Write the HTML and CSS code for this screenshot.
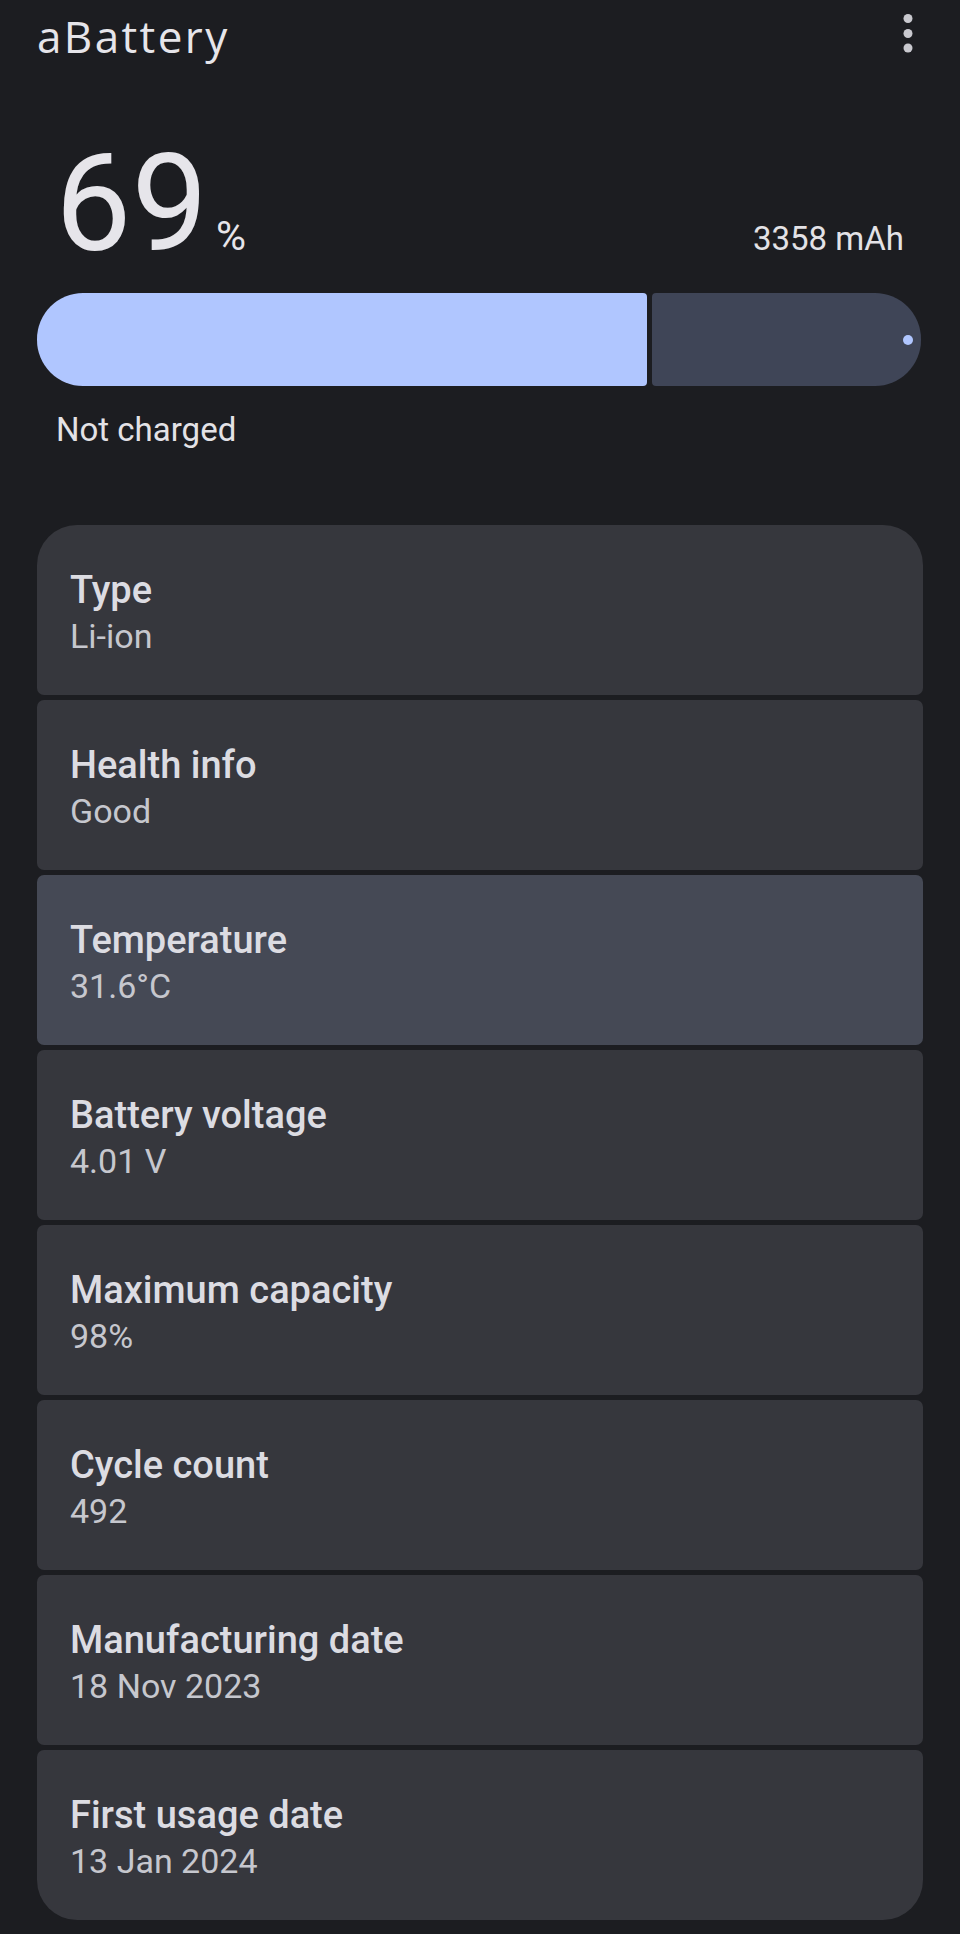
FILE: index.html
```html
<!DOCTYPE html>
<html lang="en">
<head>
<meta charset="utf-8">
<title>aBattery</title>
<link rel="stylesheet" href="styles.css">
</head>
<body>
<header class="appbar">
  <h1 class="app-title">aBattery</h1>
  <svg class="menu" width="10" height="40" viewBox="0 0 10 40" aria-label="More options">
    <circle cx="5" cy="4.5" r="4.5"/>
    <circle cx="5" cy="19.5" r="4.5"/>
    <circle cx="5" cy="34" r="4.5"/>
  </svg>
</header>

<section class="hero">
  <div class="level-row">
    <div class="level"><span class="level-num">69</span><span class="level-unit">%</span></div>
    <div class="capacity">3358 mAh</div>
  </div>
  <div class="bar">
    <div class="bar-fill" style="width: 69%"></div>
    <div class="bar-track"><span class="bar-dot"></span></div>
  </div>
  <div class="status">Not charged</div>
</section>

<section class="cards">
  <div class="card"><div class="card-title">Type</div><div class="card-value">Li-ion</div></div>
  <div class="card"><div class="card-title">Health info</div><div class="card-value">Good</div></div>
  <div class="card card-active"><div class="card-title">Temperature</div><div class="card-value">31.6°C</div></div>
  <div class="card"><div class="card-title">Battery voltage</div><div class="card-value">4.01 V</div></div>
  <div class="card"><div class="card-title">Maximum capacity</div><div class="card-value">98%</div></div>
  <div class="card"><div class="card-title">Cycle count</div><div class="card-value">492</div></div>
  <div class="card"><div class="card-title">Manufacturing date</div><div class="card-value">18 Nov 2023</div></div>
  <div class="card"><div class="card-title">First usage date</div><div class="card-value">13 Jan 2024</div></div>
</section>
</body>
</html>
```

FILE: styles.css
```css
* { box-sizing: border-box; }

html, body {
  margin: 0;
  padding: 0;
  background: #1c1d21;
  color: #e3e2e6;
  font-family: Roboto, "Liberation Sans", sans-serif;
}

body {
  min-height: 1934px;
}

.appbar {
  display: flex;
  justify-content: space-between;
  align-items: flex-start;
  padding: 11px 47px 0 37px;
}

.app-title {
  margin: 0;
  font-family: "Open Sans", Roboto, sans-serif;
  font-weight: 400;
  font-size: 44px;
  line-height: 51px;
  letter-spacing: 2.4px;
  color: #e6e5ea;
}

.menu {
  margin-top: 3px;
  fill: #c9c9cf;
}

.hero {
  margin-top: 74px;
}

.level-row {
  display: flex;
  justify-content: space-between;
  align-items: baseline;
  padding: 0 56px 0 55px;
}

.level {
  display: flex;
  align-items: baseline;
}

.level-num {
  font-size: 136px;
  line-height: 136px;
  font-weight: 400;
  color: #e6e5ea;
}

.level-unit {
  font-size: 41px;
  line-height: 41px;
  margin-left: 8px;
  color: #e6e5ea;
}

.capacity {
  font-size: 33px;
  line-height: 40px;
  color: #e3e2e6;
}

.bar {
  display: flex;
  gap: 5px;
  height: 93px;
  margin: 21px 39px 0 37px;
}

.bar-fill {
  background: #b0c6ff;
  border-radius: 46px 4px 4px 46px;
}

.bar-track {
  flex: 1;
  display: flex;
  justify-content: flex-end;
  align-items: center;
  padding-right: 8px;
  background: #3f4557;
  border-radius: 4px 46px 46px 4px;
}

.bar-dot {
  width: 10px;
  height: 10px;
  border-radius: 50%;
  background: #b0c6ff;
}

.status {
  margin-top: 24px;
  padding-left: 56px;
  font-size: 33px;
  line-height: 40px;
  color: #e3e2e6;
}

.cards {
  display: flex;
  flex-direction: column;
  gap: 5px;
  margin: 75px 37px 0 37px;
}

.card {
  height: 170px;
  padding: 43px 33px 0 33px;
  background: #36373d;
  border-radius: 7px;
}

.card:first-child {
  border-radius: 40px 40px 7px 7px;
}

.card:last-child {
  border-radius: 7px 7px 40px 40px;
}

.card-active {
  background: #454955;
}

.card-title {
  font-size: 38px;
  line-height: 45px;
  font-weight: 500;
  color: #dcdce2;
}

.card-value {
  margin-top: 3px;
  font-size: 34px;
  line-height: 40px;
  color: #c6c7ce;
}
```
